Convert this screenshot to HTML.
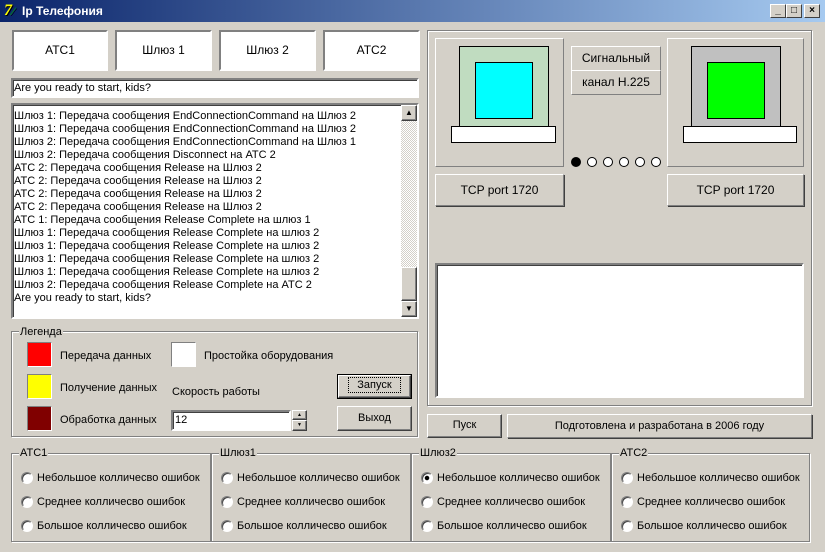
<!DOCTYPE html>
<html><head><meta charset="utf-8"><style>
*{box-sizing:border-box;margin:0;padding:0}
body{width:825px;height:552px;background:#d4d0c8;font-family:"Liberation Sans","DejaVu Sans",sans-serif;font-size:11px;position:relative;overflow:hidden;color:#000}
.a{position:absolute}
.title{left:0;top:0;width:825px;height:22px;background:linear-gradient(90deg,#0a246a,#a6caf0);color:#fff;font-weight:bold;font-size:12px;line-height:22px;padding-left:22px}
.tb{top:4px;width:16px;height:14px;background:#d4d0c8;border:1px solid;border-color:#fff #404040 #404040 #fff;font-size:10px;line-height:12px;text-align:center;color:#000;font-weight:bold}
.sunk{border:1px solid;border-color:#808080 #fff #fff #808080}
.sunk2{border:2px solid;border-color:#808080 #fff #fff #808080;box-shadow:inset 1px 1px 0 #404040}
.rais{border:1px solid;border-color:#fff #808080 #808080 #fff}
.btn{border:1px solid;border-color:#fff #404040 #404040 #fff;box-shadow:inset -1px -1px 0 #808080;text-align:center}
.topb{background:#fff;border:2px solid;border-color:#808080 #fff #fff #808080;text-align:center;line-height:36px;font-size:12px}
.grp{border:1px solid #808080;box-shadow:1px 1px 0 #fff,inset 1px 1px 0 #fff}
.lg{background:#d4d0c8;padding:0 1px;line-height:12px}
.rad{width:12px;height:12px;border-radius:50%;background:#fff;border:1px solid;border-color:#808080 #fff #fff #808080;box-shadow:inset 1px 1px 0 #404040}
.memo div{height:13px;line-height:13px;white-space:nowrap}
.dot{width:10px;height:10px;border-radius:50%;border:1px solid #000;background:#fff;top:157px}
</style></head><body>
<div class="a title">Ip Телефония</div>
<div class="a" style="left:4px;top:3px;font:bold italic 16px 'Liberation Serif',serif;color:#ff0;line-height:16px;text-shadow:1px 1px 0 #000">7<span style="color:#0a0;font-size:12px">⁄</span></div>
<div class="a tb" style="left:770px">_</div><div class="a tb" style="left:786px">□</div><div class="a tb" style="left:804px">×</div>

<div class="a topb" style="left:12px;top:30px;width:96px;height:41px">АТС1</div>
<div class="a topb" style="left:115px;top:30px;width:97px;height:41px">Шлюз 1</div>
<div class="a topb" style="left:219px;top:30px;width:97px;height:41px">Шлюз 2</div>
<div class="a topb" style="left:323px;top:30px;width:97px;height:41px">АТС2</div>

<div class="a sunk2" style="left:11px;top:78px;width:408px;height:20px;background:#fff;padding-left:1px;line-height:17px">Are you ready to start, kids?</div>

<div class="a sunk2 memo" style="left:11px;top:103px;width:408px;height:216px;background:#fff;padding:5px 0 0 1px">
<div>Шлюз 1: Передача сообщения EndConnectionCommand на Шлюз 2</div>
<div>Шлюз 1: Передача сообщения EndConnectionCommand на Шлюз 2</div>
<div>Шлюз 2: Передача сообщения EndConnectionCommand на Шлюз 1</div>
<div>Шлюз 2: Передача сообщения Disconnect на АТС 2</div>
<div>АТС 2: Передача сообщения Release на Шлюз 2</div>
<div>АТС 2: Передача сообщения Release на Шлюз 2</div>
<div>АТС 2: Передача сообщения Release на Шлюз 2</div>
<div>АТС 2: Передача сообщения Release на Шлюз 2</div>
<div>АТС 1: Передача сообщения Release Complete на шлюз 1</div>
<div>Шлюз 1: Передача сообщения Release Complete на шлюз 2</div>
<div>Шлюз 1: Передача сообщения Release Complete на шлюз 2</div>
<div>Шлюз 1: Передача сообщения Release Complete на шлюз 2</div>
<div>Шлюз 1: Передача сообщения Release Complete на шлюз 2</div>
<div>Шлюз 2: Передача сообщения Release Complete на АТС 2</div>
<div>Are you ready to start, kids?</div>
</div>
<div class="a" style="left:401px;top:105px;width:16px;height:212px;background:repeating-conic-gradient(#fff 0 25%,#d4d0c8 0 50%) 0 0/2px 2px"></div>
<div class="a btn" style="left:401px;top:105px;width:16px;height:16px;background:#d4d0c8;font-size:8px;line-height:14px">▲</div>
<div class="a btn" style="left:401px;top:267px;width:16px;height:34px;background:#d4d0c8"></div>
<div class="a btn" style="left:401px;top:301px;width:16px;height:16px;background:#d4d0c8;font-size:8px;line-height:14px">▼</div>

<!-- legend -->
<div class="a grp" style="left:11px;top:331px;width:407px;height:106px"></div>
<div class="a lg" style="left:19px;top:326px">Легенда</div>
<div class="a sunk" style="left:27px;top:342px;width:25px;height:25px;background:#f00"></div>
<div class="a" style="left:60px;top:350px">Передача данных</div>
<div class="a sunk" style="left:27px;top:374px;width:25px;height:25px;background:#ff0"></div>
<div class="a" style="left:60px;top:382px">Получение данных</div>
<div class="a sunk" style="left:27px;top:406px;width:25px;height:25px;background:#800000"></div>
<div class="a" style="left:60px;top:414px">Обработка данных</div>
<div class="a sunk" style="left:171px;top:342px;width:25px;height:25px;background:#fff"></div>
<div class="a" style="left:204px;top:350px">Простойка оборудования</div>
<div class="a" style="left:172px;top:386px">Скорость работы</div>
<div class="a sunk2" style="left:171px;top:410px;width:120px;height:21px;background:#fff;padding-left:2px;line-height:17px">12</div>
<div class="a btn" style="left:292px;top:410px;width:15px;height:10px;background:#d4d0c8;font-size:5px;line-height:8px">▲</div>
<div class="a btn" style="left:292px;top:420px;width:15px;height:11px;background:#d4d0c8;font-size:5px;line-height:9px">▼</div>
<div class="a" style="left:337px;top:374px;width:75px;height:25px;border:1px solid #000;background:#d4d0c8"><div class="btn" style="width:73px;height:23px;line-height:19px"><span style="outline:1px dotted #000;padding:1px 8px">Запуск</span></div></div>
<div class="a btn" style="left:337px;top:406px;width:75px;height:25px;background:#d4d0c8;line-height:22px">Выход</div>

<!-- right panel -->
<div class="a grp" style="left:427px;top:30px;width:385px;height:376px"></div>
<div class="a rais" style="left:435px;top:38px;width:129px;height:129px"></div>
<div class="a" style="left:459px;top:46px;width:90px;height:81px;background:#c0dcc0;border:1px solid #000"></div>
<div class="a" style="left:475px;top:62px;width:58px;height:57px;background:#0ff;border:1px solid #000"></div>
<div class="a" style="left:451px;top:126px;width:105px;height:17px;background:#fff;border:1px solid #000"></div>
<div class="a rais" style="left:667px;top:38px;width:137px;height:129px"></div>
<div class="a" style="left:691px;top:46px;width:90px;height:81px;background:#c0c0c0;border:1px solid #000"></div>
<div class="a" style="left:707px;top:62px;width:58px;height:57px;background:#0f0;border:1px solid #000"></div>
<div class="a" style="left:683px;top:126px;width:114px;height:17px;background:#fff;border:1px solid #000"></div>
<div class="a rais" style="left:571px;top:46px;width:90px;height:25px;text-align:center;line-height:23px;font-size:12px">Сигнальный</div>
<div class="a rais" style="left:571px;top:70px;width:90px;height:25px;text-align:center;line-height:23px;font-size:12px">канал H.225</div>
<div class="a dot" style="left:571px;background:#000"></div>
<div class="a dot" style="left:587px"></div>
<div class="a dot" style="left:603px"></div>
<div class="a dot" style="left:619px"></div>
<div class="a dot" style="left:635px"></div>
<div class="a dot" style="left:651px"></div>
<div class="a rais" style="left:435px;top:174px;width:129px;height:32px;text-align:center;line-height:30px;box-shadow:1px 1px 0 #404040;font-size:12px">TCP port 1720</div>
<div class="a rais" style="left:667px;top:174px;width:137px;height:32px;text-align:center;line-height:30px;box-shadow:1px 1px 0 #404040;font-size:12px">TCP port 1720</div>
<div class="a sunk2" style="left:435px;top:263px;width:369px;height:135px;background:#fff"></div>
<div class="a btn" style="left:427px;top:414px;width:75px;height:24px;background:#d4d0c8;line-height:21px">Пуск</div>
<div class="a rais" style="left:507px;top:414px;width:305px;height:24px;text-align:center;line-height:22px;box-shadow:1px 1px 0 #404040">Подготовлена и разработана в 2006 году</div>

<!-- radio groups -->
<div class="a grp" style="left:11px;top:453px;width:200px;height:89px"></div>
<div class="a lg" style="left:19px;top:447px">АТС1</div>
<div class="a grp" style="left:211px;top:453px;width:200px;height:89px"></div>
<div class="a lg" style="left:219px;top:447px">Шлюз1</div>
<div class="a grp" style="left:411px;top:453px;width:200px;height:89px"></div>
<div class="a lg" style="left:419px;top:447px">Шлюз2</div>
<div class="a grp" style="left:611px;top:453px;width:199px;height:89px"></div>
<div class="a lg" style="left:619px;top:447px">АТС2</div>

<div class="a rad" style="left:21px;top:472px"></div><div class="a" style="left:37px;top:472px">Небольшое колличесво ошибок</div>
<div class="a rad" style="left:21px;top:496px"></div><div class="a" style="left:37px;top:496px">Среднее колличесво ошибок</div>
<div class="a rad" style="left:21px;top:520px"></div><div class="a" style="left:37px;top:520px">Большое колличесво ошибок</div>
<div class="a rad" style="left:221px;top:472px"></div><div class="a" style="left:237px;top:472px">Небольшое колличесво ошибок</div>
<div class="a rad" style="left:221px;top:496px"></div><div class="a" style="left:237px;top:496px">Среднее колличесво ошибок</div>
<div class="a rad" style="left:221px;top:520px"></div><div class="a" style="left:237px;top:520px">Большое колличесво ошибок</div>
<div class="a rad" style="left:421px;top:472px;background:radial-gradient(#000 0 2px,#fff 2.5px)"></div><div class="a" style="left:437px;top:472px">Небольшое колличесво ошибок</div>
<div class="a rad" style="left:421px;top:496px"></div><div class="a" style="left:437px;top:496px">Среднее колличесво ошибок</div>
<div class="a rad" style="left:421px;top:520px"></div><div class="a" style="left:437px;top:520px">Большое колличесво ошибок</div>
<div class="a rad" style="left:621px;top:472px"></div><div class="a" style="left:637px;top:472px">Небольшое колличесво ошибок</div>
<div class="a rad" style="left:621px;top:496px"></div><div class="a" style="left:637px;top:496px">Среднее колличесво ошибок</div>
<div class="a rad" style="left:621px;top:520px"></div><div class="a" style="left:637px;top:520px">Большое колличесво ошибок</div>
</body></html>
